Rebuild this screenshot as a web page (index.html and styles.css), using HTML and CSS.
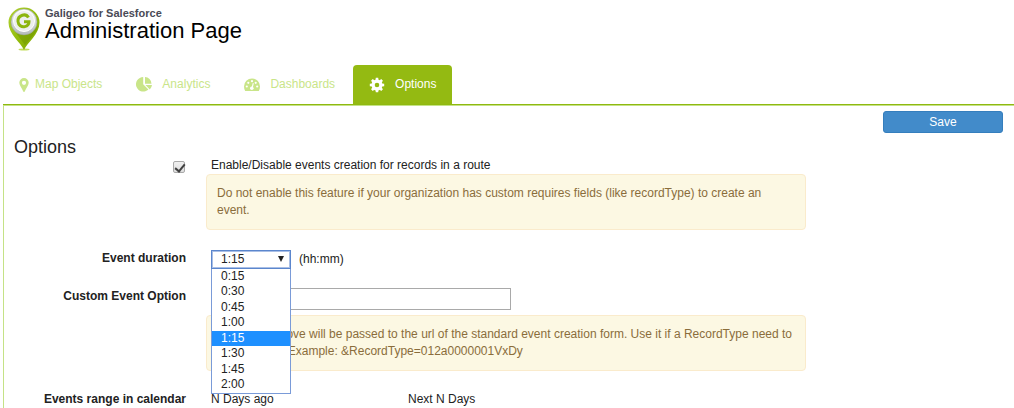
FILE: index.html
```html
<!DOCTYPE html>
<html lang="en">
<head>
<meta charset="utf-8">
<meta name="viewport" content="width=device-width, initial-scale=1">
<title>Galigeo for Salesforce - Administration Page</title>
<link rel="stylesheet" href="styles.css">
</head>
<body>
<header class="header">
  <svg class="logo" viewBox="0 0 32 44" aria-hidden="true">
    <defs>
      <linearGradient id="pin" x1="0" y1="0" x2="1" y2="1">
        <stop offset="0" stop-color="#b3d334"/><stop offset=".5" stop-color="#93bd0c"/><stop offset="1" stop-color="#7da400"/>
      </linearGradient>
      <linearGradient id="disc" x1="0" y1="0" x2="0" y2="1">
        <stop offset="0" stop-color="#f4f6f4"/><stop offset="1" stop-color="#b4baba"/>
      </linearGradient>
    </defs>
    <ellipse cx="16" cy="42.500" rx="5.500" ry="1" fill="#c3dd5c"/>
    <path d="M16 43C13 36 .5 27 .5 15.500a15.500 15 0 0 1 31 0C31.500 27 19 36 16 43z" fill="url(#pin)"/>
    <path d="M28 21C24 28 17 30 8 26l9 12c5-7 12-12 13-20z" fill="#6f9500" opacity=".5"/>
    <circle cx="16" cy="15" r="13" fill="url(#disc)" stroke="#8f9a8a" stroke-width=".5"/>
    <circle cx="16" cy="14" r="10.500" fill="#eceeed" stroke="#ffffff"/>
    <path d="M20.500 10.500C19 8 16.500 7.500 14.300 8.200 11 9.200 9.800 11.800 10 14.500c.3 3.700 3.600 5.900 6.800 5.100 2.700-.6 4.200-2.200 4.200-4.800h-5" fill="none" stroke="#8cb50d" stroke-width="3"/>
  </svg>
  <div class="titles">
    <div class="product">Galigeo for Salesforce</div>
    <h1 class="title">Administration Page</h1>
  </div>
</header>

<nav class="tabs" aria-label="Sections">
  <a class="tab tab-narrow" href="#map">
    <svg class="pin-icon" viewBox="0 0 10 14" aria-hidden="true"><path fill="currentColor" fill-rule="evenodd" d="M5 0a4.700 4.700 0 0 1 4.700 4.700C9.700 7 7.500 9.500 5.700 13.500q-.7 1-1.400 0C2.500 9.500.3 7 .3 4.700A4.700 4.700 0 0 1 5 0zm0 2.700a2.100 2.100 0 1 0 0 4.200 2.100 2.100 0 0 0 0-4.200z"/></svg>
    <span>Map Objects</span></a>
  <a class="tab" href="#analytics">
    <svg class="icon" viewBox="0 0 16 16" aria-hidden="true"><path fill="currentColor" d="M7.200 0v7.300l5.200 5.200A7.300 7.300 0 1 1 7.200 0zM9 0a7 7 0 0 1 6.500 6.700H9zM9.500 8H16a7 7 0 0 1-2.200 4.400z"/></svg>
    <span>Analytics</span></a>
  <a class="tab" href="#dashboards">
    <svg class="icon" viewBox="0 0 16 16" aria-hidden="true"><path fill="currentColor" d="M8 1.500a8 8 0 0 1 8 8q0 2.500-1.200 4.500H1.200Q0 12 0 9.500a8 8 0 0 1 8-8z"/><g fill="#fff"><circle cx="2.800" cy="9.500" r="1.100"/><circle cx="4.300" cy="5.800" r="1.100"/><circle cx="8" cy="4.200" r="1.100"/><circle cx="11.700" cy="5.800" r="1.100"/><circle cx="13.200" cy="9.500" r="1.100"/><circle cx="7.800" cy="11.300" r="1.800"/><path d="M8.800 6l1 .2-1.100 5-1.300-.3z"/></g></svg>
    <span>Dashboards</span></a>
  <a class="tab tab-active" href="#options" aria-current="page">
    <svg class="icon" viewBox="0 0 16 16" aria-hidden="true"><g fill="currentColor"><path fill-rule="evenodd" d="M8 2.500a5.500 5.500 0 1 1 0 11 5.500 5.500 0 0 1 0-11zm0 3.200a2.300 2.300 0 1 0 0 4.600 2.300 2.300 0 0 0 0-4.600z"/><path id="tooth" d="M6.400 3.500L6.800.8h2.400l.4 2.700zM6.400 12.500l.4 2.700h2.400l.4-2.700z"/><use href="#tooth" transform="rotate(45 8 8)"/><use href="#tooth" transform="rotate(90 8 8)"/><use href="#tooth" transform="rotate(135 8 8)"/></g></svg>
    <span>Options</span></a>
</nav>

<main class="panel">
  <div class="actions"><button class="save" type="button">Save</button></div>
  <h2 class="heading">Options</h2>
  <form class="form">
    <div class="row row-enable">
      <div class="label"><input class="check" type="checkbox" id="enable" checked></div>
      <div class="field">
        <label class="line" for="enable">Enable/Disable events creation for records in a route</label>
        <p class="note">Do not enable this feature if your organization has custom requires fields (like recordType) to create an event.</p>
      </div>
    </div>
    <div class="row row-duration">
      <label class="label" for="duration">Event duration</label>
      <div class="field inline">
        <div class="picker">
          <select class="select" id="duration">
            <option>0:15</option><option>0:30</option><option>0:45</option><option>1:00</option><option selected>1:15</option><option>1:30</option><option>1:45</option><option>2:00</option>
          </select>
          <span class="arrow" aria-hidden="true"></span>
          <ul class="menu" role="listbox" aria-label="Event duration">
            <li class="choice" role="option">0:15</li>
            <li class="choice" role="option">0:30</li>
            <li class="choice" role="option">0:45</li>
            <li class="choice" role="option">1:00</li>
            <li class="choice choice-active" role="option" aria-selected="true">1:15</li>
            <li class="choice" role="option">1:30</li>
            <li class="choice" role="option">1:45</li>
            <li class="choice" role="option">2:00</li>
          </ul>
        </div>
        <span>(hh:mm)</span>
      </div>
    </div>
    <div class="row row-custom">
      <label class="label" for="custom">Custom Event Option</label>
      <div class="field">
        <input class="text" type="text" id="custom">
        <p class="note">The value above will be passed to the url of the standard event creation form. Use it if a RecordType need to be specified. Example: &amp;RecordType=012a0000001VxDy</p>
      </div>
    </div>
    <div class="row">
      <div class="label">Events range in calendar</div>
      <div class="field range"><span>N Days ago</span><span>Next N Days</span></div>
    </div>
  </form>
</main>
</body>
</html>
```

FILE: styles.css
```css
* { box-sizing: border-box; }

body {
  margin: 0;
  background: #fff;
  color: #222;
  font: 12px/17px "Liberation Sans", Arial, sans-serif;
}

.header { display: flex; gap: 5px; padding: 7px 8px 0; }
.logo { width: 32px; height: 44px; }
.product { color: #4a4a56; font-size: 11px; font-weight: bold; line-height: 12px; }
.title { margin: 0; color: #000; font-size: 22px; font-weight: normal; line-height: 24px; }

.tabs {
  display: flex;
  gap: 2px;
  margin: 14px 0 0 3px;
  border-bottom: 1px solid #8fb910;
}
.tab {
  display: flex;
  align-items: center;
  gap: 10px;
  height: 39px;
  padding: 0 16px;
  border-radius: 4px 4px 0 0;
  color: #c9e589;
  text-decoration: none;
}
.tab-narrow { gap: 6px; }
.tab-active { background: #94ba12; color: #fff; }
.icon { width: 16px; height: 16px; }
.pin-icon { width: 10px; height: 14px; }

.panel {
  min-height: calc(100vh - 105px);
  margin-left: 3px;
  padding: 5px 11px 0 10px;
  border: solid #c5e286;
  border-width: 1px 0 0 1px;
}
.actions { display: flex; justify-content: flex-end; }
.save {
  width: 120px;
  height: 22px;
  padding: 0;
  border: 1px solid #357ebd;
  border-radius: 3px;
  background: #428bca;
  color: #fff;
  font: inherit;
}
.heading { margin: 4px 0 0; font-size: 18px; font-weight: normal; line-height: 20px; }

.row { display: grid; grid-template-columns: 172px minmax(0, 600px); gap: 20px; }
.row-enable { margin-bottom: 20px; }
.row-duration { margin-bottom: 20px; }
.row-custom { margin-bottom: 20px; }
.label { font-weight: bold; text-align: right; }
.field { padding-left: 5px; }
.line { display: block; }

.check {
  appearance: none;
  width: 12px;
  height: 12px;
  margin: 4px 1px 0;
  border: 1px solid #a9a9a9;
  border-radius: 2px;
  background: linear-gradient(#f0f0f0, #dedede);
}
.check:checked::before {
  content: "";
  display: block;
  width: 4px;
  height: 8px;
  margin: 0 0 0 3px;
  border: solid #404040;
  border-width: 0 2px 2px 0;
  transform: rotate(40deg);
}

.note {
  margin: 0 0 0 -5px;
  padding: 10px;
  min-height: 56px;
  border: 1px solid #faebcc;
  border-radius: 4px;
  background: #fcf8e3;
  color: #8a6d3b;
}

.inline { display: flex; gap: 8px; align-items: center; height: 18px; }
.picker { position: relative; width: 80px; }
.select {
  display: block;
  appearance: none;
  width: 100%;
  height: 19px;
  padding: 0 9px;
  border: 1px solid #5b86cd;
  outline: 1px solid #a9bfe6;
  outline-offset: -2px;
  border-radius: 0;
  background: #fff;
  color: #222;
  font: inherit;
}
.arrow {
  position: absolute;
  top: 6px;
  right: 7px;
  border: solid transparent;
  border-width: 6px 3px 0;
  border-top-color: #222;
}
.menu {
  position: absolute;
  top: 100%;
  left: 0;
  z-index: 1;
  display: grid;
  grid-auto-rows: 1fr;
  width: 100%;
  height: 125px;
  margin: 0;
  padding: 0;
  border: 1px solid #7a9bd8;
  border-top: 0;
  background: #fff;
  list-style: none;
}
.choice { padding-left: 9px; line-height: 15px; }
.choice-active { background: #1e90ff; color: #fff; }

.text {
  display: block;
  width: 300px;
  max-width: 100%;
  height: 22px;
  margin-bottom: 5px;
  padding: 0 4px;
  border: 1px solid #a9a9a9;
  font: inherit;
}
.range { display: grid; grid-template-columns: 197px 1fr; }
```
